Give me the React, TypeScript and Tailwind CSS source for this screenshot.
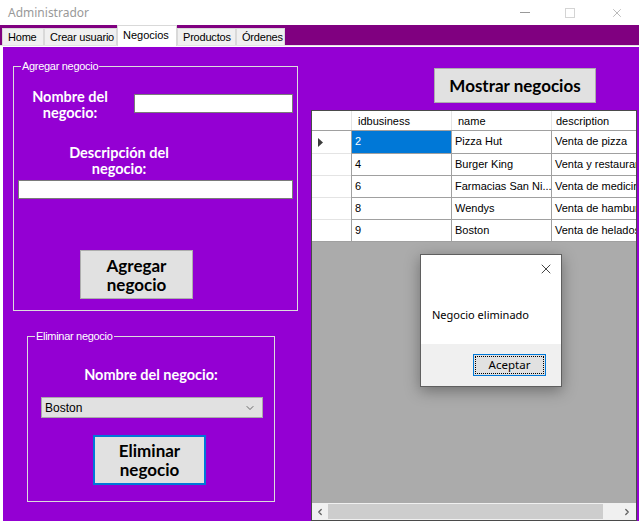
import React from 'react';
import { X, ChevronDown, ChevronLeft, ChevronRight } from 'lucide-react';

const rows = [
  { id: '2', name: 'Pizza Hut', desc: 'Venta de pizza' },
  { id: '4', name: 'Burger King', desc: 'Venta y restaurante' },
  { id: '6', name: 'Farmacias San Ni...', desc: 'Venta de medicinas' },
  { id: '8', name: 'Wendys', desc: 'Venta de hamburguesas' },
  { id: '9', name: 'Boston', desc: 'Venta de helados' },
];

const tabs = [
  { t: 'Home', w: 'w-[42px]' },
  { t: 'Crear usuario', w: 'w-[73px]' },
  { t: 'Negocios', w: 'w-[60px]' },
  { t: 'Productos', w: 'w-[59px]' },
  { t: 'Órdenes', w: 'w-[49px]' },
];

const win = "font-['Liberation_Sans',Arial,sans-serif]";
const label = "font-['Lato','DejaVu_Sans',sans-serif] font-bold text-white text-[14.5px] leading-[16px] text-center";
const btn = "font-['Lato','DejaVu_Sans',sans-serif] font-bold text-black bg-[#e1e1e1]";

const TitleBar = () => (
  <div className="h-[25px] flex items-center justify-between bg-white pl-[8px] pr-[15px]">
    <span className="text-[12px] text-[#999999] font-['Noto_Sans',sans-serif]">Administrador</span>
    <div className="flex items-center gap-[35px]">
      <div className="w-[10px] h-px bg-[#999999]" />
      <div className="w-[10px] h-[10px] border border-[#d4d4d4]" />
      <X size={14} strokeWidth={1} className="text-[#8a8a8a]" />
    </div>
  </div>
);

const TabStrip = () => (
  <div className={`h-[20px] bg-[#800080] flex items-end pl-[2px] ${win}`}>
    {tabs.map(({ t, w }) =>
      t === 'Negocios' ? (
        <div key={t} className={`${w} h-[21px] -mb-[1px] relative z-10 bg-white border border-b-0 border-[#d9d9d9] pl-[5px] text-[11px] leading-[18px] text-black whitespace-nowrap`}>
          {t}
        </div>
      ) : (
        <div key={t} className={`${w} h-[17px] bg-[#f0f0f0] border border-b-0 border-[#d9d9d9] pl-[5px] text-[11px] leading-[16px] text-black whitespace-nowrap tracking-[-0.2px]`}>
          {t}
        </div>
      )
    )}
  </div>
);

const GroupBox = ({ title, className, children }: { title: string; className: string; children: React.ReactNode }) => (
  <div className={`relative border border-[#dcdcdc] ${className}`}>
    <span className={`absolute -top-[7px] left-[7px] px-[1px] bg-[#9400d3] text-white text-[11px] leading-[12px] tracking-[-0.3px] ${win}`}>
      {title}
    </span>
    {children}
  </div>
);

const Grid = () => (
  <div className={`flex-1 flex flex-col border border-[#4a4a4a] bg-[#ababab] text-[11px] text-black ${win}`}>
    <div className="flex h-[20px] bg-white border-b border-[#a0a0a0]">
      <div className="w-[40px] border-r border-[#e4e4e4]" />
      <div className="w-[100px] border-r border-[#e4e4e4] pl-[6px] leading-[20px]">idbusiness</div>
      <div className="w-[100px] border-r border-[#e4e4e4] pl-[6px] leading-[20px]">name</div>
      <div className="flex-1 pl-[4px] leading-[20px] whitespace-nowrap overflow-hidden">description</div>
    </div>
    {rows.map((r, i) => (
      <div key={r.id} className={`flex h-[22px] bg-white ${i > 0 ? 'border-t border-[#a0a0a0]' : ''}`}>
        <div className={`w-[39px] flex items-center pl-[6px] ${i > 0 ? 'border-t border-[#e4e4e4] -mt-px' : ''}`}>
          {i === 0 && (
            <svg width="5" height="9" viewBox="0 0 5 9">
              <path d="M0 0 L5 4.5 L0 9 Z" fill="#3c3c3c" />
            </svg>
          )}
        </div>
        <div className={`w-[101px] border-l border-r border-[#a0a0a0] pl-[3px] leading-[21px] ${i === 0 ? 'bg-[#0078d7] text-white' : ''}`}>
          {r.id}
        </div>
        <div className="w-[100px] border-r border-[#a0a0a0] pl-[3px] leading-[21px] whitespace-nowrap overflow-hidden">{r.name}</div>
        <div className="flex-1 min-w-0 pl-[3px] leading-[21px] whitespace-nowrap overflow-hidden">{r.desc}</div>
      </div>
    ))}
    <div className="flex-1 border-t border-[#a0a0a0]" />
    <div className="h-[17px] flex items-center bg-[#f0f0f0]">
      <div className="w-[16px] flex justify-center">
        <ChevronLeft size={10} strokeWidth={3} className="text-[#606060]" />
      </div>
      <div className="flex-1 h-[15px] bg-[#cdcdcd]" />
      <div className="w-[33px] flex justify-end pr-[4px]">
        <ChevronRight size={10} strokeWidth={3} className="text-[#606060]" />
      </div>
    </div>
  </div>
);

const MessageBox = () => (
  <div className="absolute left-[420px] top-[254px] w-[142px] h-[133px] border border-[#5f5f5f] bg-white flex flex-col shadow-[0_4px_14px_rgba(0,0,0,0.35)]">
    <div className="flex-1 relative flex flex-col">
      <div className="flex justify-end pr-[7px] pt-[6px]">
        <X size={16} strokeWidth={1.1} className="text-black" />
      </div>
      <div className="pl-[11px] pt-[30px] text-[11px] text-black font-['Noto_Sans',sans-serif] leading-[16px]">Negocio eliminado</div>
    </div>
    <div className="h-[42px] bg-[#f0f0f0] flex justify-end items-start pt-[10px] pr-[15px]">
      <div className="w-[73px] h-[22px] border border-[#0078d7] bg-[#e1e1e1] p-[1px]">
        <div className="h-full border border-dotted border-black flex items-center justify-center text-[11.5px] text-black font-['Noto_Sans',sans-serif]">
          Aceptar
        </div>
      </div>
    </div>
  </div>
);

export default function App() {
  return (
    <div className="w-[639px] h-[523px] bg-white relative overflow-hidden flex flex-col">
      <TitleBar />
      <TabStrip />
      <div className="h-[2px] border-t border-[#e3e3e3] bg-white" />
      <div className="h-[474px] flex bg-[#9400d3] border-l-[3px] border-white">
        <div className="w-[308px] flex flex-col">
          <GroupBox title="Agregar negocio" className="mt-[19px] ml-[10px] w-[285px] h-[245px]">
            <div className="flex items-start">
              <div className={`${label} ml-[11px] w-[90px] mt-[22px]`}>Nombre del negocio:</div>
              <div className="ml-[19px] mt-[27px] w-[159px] h-[19px] bg-white border border-[#7a7a7a]" />
            </div>
            <div className={`${label} ml-[30px] w-[150px] mt-[24px]`}>Descripción del negocio:</div>
            <div className="ml-[4px] mt-[3px] w-[275px] h-[19px] bg-white border border-[#7a7a7a]" />
            <button className={`${btn} ml-[66px] mt-[51px] w-[113px] h-[49px] border border-[#adadad] text-[17px] leading-[19px]`}>
              Agregar negocio
            </button>
          </GroupBox>
          <GroupBox title="Eliminar negocio" className="mt-[25px] ml-[24px] w-[248px] h-[166px]">
            <div className={`${label} mt-[30px]`}>Nombre del negocio:</div>
            <div className={`ml-[13px] mt-[14px] w-[222px] h-[21px] bg-[#e1e1e1] border border-[#a9a9a9] flex items-center justify-between pl-[3px] pr-[6px] text-[12px] text-black ${win}`}>
              <span>Boston</span>
              <ChevronDown size={12} strokeWidth={1.4} className="text-[#333]" />
            </div>
            <button className={`${btn} ml-[65px] mt-[17px] w-[113px] h-[50px] border-2 border-[#0078d7] text-[17px] leading-[19px]`}>
              Eliminar negocio
            </button>
          </GroupBox>
        </div>
        <div className="w-[326px] flex flex-col">
          <button className={`${btn} ml-[123px] mt-[21px] w-[162px] h-[35px] border border-[#adadad] text-[17px]`}>
            Mostrar negocios
          </button>
          <div className="mt-[7px] flex-1 flex flex-col">
            <Grid />
          </div>
        </div>
      </div>
      <MessageBox />
    </div>
  );
}
